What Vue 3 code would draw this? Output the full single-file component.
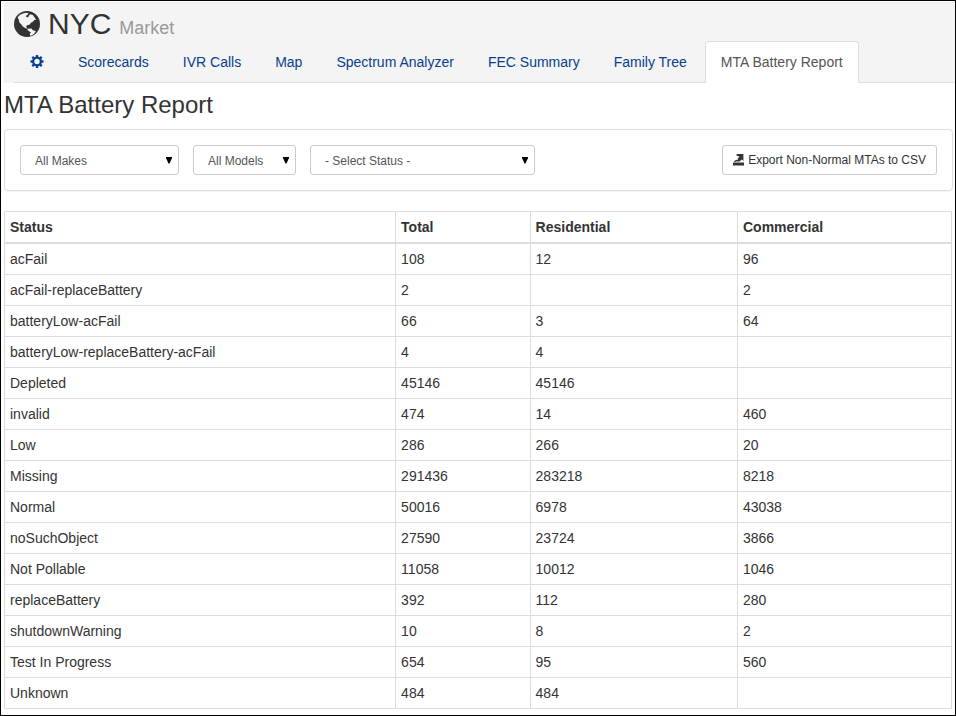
<script setup>
import { ref } from 'vue'

const tabs = ['Scorecards', 'IVR Calls', 'Map', 'Spectrum Analyzer', 'FEC Summary', 'Family Tree', 'MTA Battery Report']
const active = ref('MTA Battery Report')

const filters = [
  { id: 'make', label: 'Make', text: 'All Makes' },
  { id: 'model', label: 'Model', text: 'All Models' },
  { id: 'status', label: 'Status', text: '- Select Status -' },
]

const columns = ['Status', 'Total', 'Residential', 'Commercial']
const rows = [
  ['acFail', '108', '12', '96'],
  ['acFail-replaceBattery', '2', '', '2'],
  ['batteryLow-acFail', '66', '3', '64'],
  ['batteryLow-replaceBattery-acFail', '4', '4', ''],
  ['Depleted', '45146', '45146', ''],
  ['invalid', '474', '14', '460'],
  ['Low', '286', '266', '20'],
  ['Missing', '291436', '283218', '8218'],
  ['Normal', '50016', '6978', '43038'],
  ['noSuchObject', '27590', '23724', '3866'],
  ['Not Pollable', '11058', '10012', '1046'],
  ['replaceBattery', '392', '112', '280'],
  ['shutdownWarning', '10', '8', '2'],
  ['Test In Progress', '654', '95', '560'],
  ['Unknown', '484', '484', ''],
]
</script>

<template>
  <div class="page">
    <header class="masthead">
      <h1 class="title">
        <svg class="globe" viewBox="0 0 26 26" aria-hidden="true">
          <circle cx="13" cy="13" r="13" fill="#333" />
          <path fill="#f4f4f4" d="M3.6 6.4 L6 3.8 L9 2.4 L12 1.8 L14.6 2.2 L13.6 3.8 L12 4.8 L12.2 6 L14.2 6.2 L15 4.4 L16.4 3.2 L18.8 4 L20.6 6.6 L22.2 9 L20.2 9 L19.2 10.6 L17 11.8 L15.4 13.8 L13 14.2 L12.2 15.4 L13.2 17.4 L11.6 17.2 L8.8 15.6 L7.4 13.4 L5.4 11.6 L4.8 8.6 Z" />
          <path fill="#f4f4f4" d="M13.2 17.8 L17.6 17.6 L18.8 19.2 L21.8 20 L20.4 22.6 L17.6 24.4 L16 24.6 L15.8 22.6 L17.2 21.4 L14.2 19.8 Z" />
        </svg>
        <span>NYC</span>
        <small>Market</small>
      </h1>
      <nav>
        <ul class="tabs">
          <li>
            <a href="#settings" class="tab" aria-label="Settings">
              <svg class="cog" viewBox="0 0 14 14" aria-hidden="true">
                <g stroke="currentColor" fill="none">
                  <circle cx="7" cy="6.5" r="3.8" stroke-width="2.2" />
                  <path stroke-width="2.4" d="M7 0V2.4M7 10.6V13M.5 6.5H3M11 6.5h2.5M2.3 1.8l1.7 1.7M10 9.5l1.7 1.7M2.3 11.2L4 9.5M10 3.5l1.7-1.7" />
                </g>
              </svg>
            </a>
          </li>
          <li v-for="t in tabs" :key="t">
            <a href="#" class="tab" :class="{ active: t === active }" @click.prevent="active = t">{{ t }}</a>
          </li>
        </ul>
      </nav>
    </header>

    <main class="content">
      <h2 class="heading">MTA Battery Report</h2>

      <form class="panel" @submit.prevent>
        <div v-for="f in filters" :key="f.id" class="field" :class="f.id">
          <select :id="f.id" :aria-label="f.label">
            <option>{{ f.text }}</option>
          </select>
          <svg class="arrow" viewBox="0 0 6 7" aria-hidden="true"><path d="M0 0h6v1L3.5 6.5h-1L0 1z" /></svg>
        </div>
        <button type="button" class="export">
          <svg class="export-icon" viewBox="0 0 12 12" aria-hidden="true">
            <path fill="#333" d="M0 8.5h11V11.5H0z M3.6 0H10.4V7L8.8 5.6 6.6 7.4H3L2 6.4 4.4 5.4 5.8 3 3.6 1.4z M1.2 6.8h1.4v1.2H1.2z" />
            <path fill="#fff" d="M4.6 2.2h1.6v1H4.6z M3.6 5h1v1h-1z" />
          </svg>
          <span>Export Non-Normal MTAs to CSV</span>
        </button>
      </form>

      <table class="report">
        <thead>
          <tr>
            <th v-for="c in columns" :key="c" scope="col" :class="c.toLowerCase()">{{ c }}</th>
          </tr>
        </thead>
        <tbody>
          <tr v-for="r in rows" :key="r[0]">
            <td v-for="(cell, i) in r" :key="i">{{ cell }}</td>
          </tr>
        </tbody>
      </table>
    </main>
  </div>
</template>

<style>
body {
  margin: 0;
  background: #fff;
}
</style>

<style scoped>
* {
  box-sizing: border-box;
}
.page {
  min-height: 100vh;
  border: 1px solid #000;
  font-family: "Liberation Sans", Arial, sans-serif;
  font-size: 14px;
  line-height: 20px;
  color: #333;
}
.masthead {
  margin: 1px 0 0 3px;
  padding-left: 9px;
  border: 1px solid #eee;
  border-width: 1px 0 0 1px;
  border-radius: 4px 0 0 0;
  background: #f4f4f4;
}
.title {
  display: flex;
  align-items: baseline;
  gap: 8px;
  margin: 0;
  padding-top: 4px;
  height: 38px;
  font-size: 30px;
  line-height: 34px;
  font-weight: 400;
}
.title small {
  font-size: 18px;
  color: #999;
}
.globe {
  width: 26px;
  height: 26px;
  align-self: flex-start;
  margin-top: 4px;
}
.tabs {
  display: flex;
  gap: 2px;
  margin: 0;
  padding: 0;
  list-style: none;
  border-bottom: 1px solid #ddd;
}
.tabs li {
  display: flex;
  margin-bottom: -1px;
}
.tab {
  display: flex;
  align-items: center;
  padding: 10px 15px;
  border: 1px solid transparent;
  border-radius: 4px 4px 0 0;
  color: #083e8c;
  text-decoration: none;
  white-space: nowrap;
}
.tab.active {
  color: #555;
  background: #fff;
  border-color: #ddd #ddd #fff;
}
.cog {
  width: 14px;
  height: 14px;
}
.content {
  padding: 8px 2px 6px 3px;
}
.heading {
  margin: 0 0 10px;
  font-size: 24px;
  line-height: 28px;
  font-weight: 400;
}
.panel {
  display: flex;
  gap: 14px;
  margin: 0 0 20px;
  padding: 15px;
  border: 1px solid #ddd;
  border-radius: 4px;
  box-shadow: 0 1px 1px rgba(0, 0, 0, 0.05);
}
.field {
  position: relative;
}
.make {
  width: 159px;
}
.model {
  width: 103px;
}
.status {
  width: 225px;
}
select,
.export {
  height: 30px;
  border: 1px solid #ccc;
  border-radius: 3px;
  background: #fff;
  font-family: inherit;
  font-size: 12px;
}
select {
  width: 100%;
  padding: 2px 24px 0 14px;
  appearance: none;
  color: #555;
}
.arrow {
  position: absolute;
  right: 7px;
  top: 12px;
  width: 6px;
  height: 7px;
  pointer-events: none;
}
.export {
  display: flex;
  align-items: center;
  gap: 3px;
  margin-left: auto;
  padding: 0 10px;
  color: #333;
  white-space: nowrap;
}
.export-icon {
  width: 12px;
  height: 12px;
}
.report {
  width: calc(100% - 1px);
  table-layout: fixed;
  border-collapse: separate;
  border-spacing: 0;
  border: 1px solid #ddd;
  border-width: 1px 0 0 1px;
}
.report th,
.report td {
  height: 31px;
  padding: 5px;
  border: 1px solid #ddd;
  border-width: 0 1px 1px 0;
  text-align: left;
}
.report th {
  height: 32px;
  border-bottom-width: 2px;
}
th.status {
  width: 41.3%;
}
th.total {
  width: 14.2%;
}
th.residential {
  width: 21.9%;
}
</style>
